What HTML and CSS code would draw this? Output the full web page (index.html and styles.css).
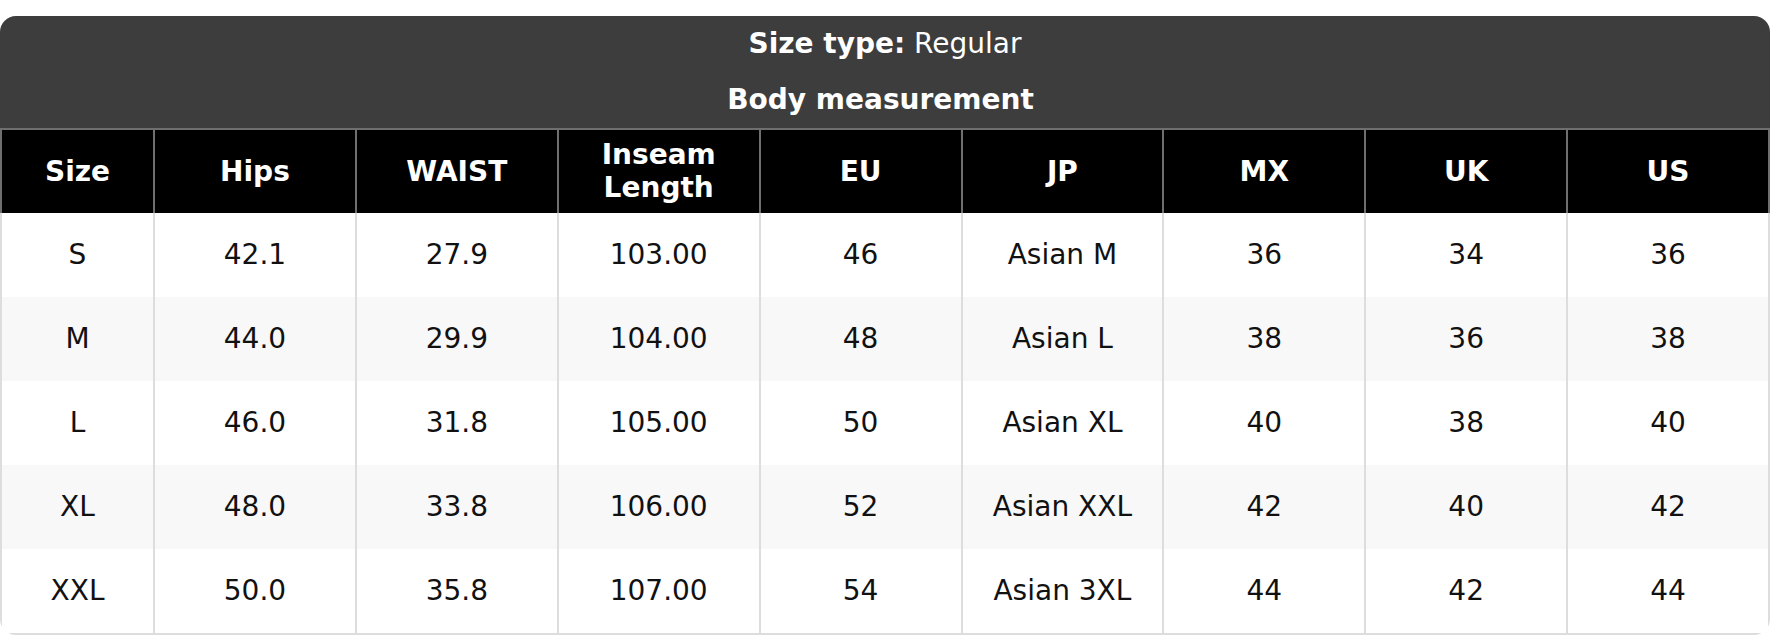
FILE: index.html
```html
<!DOCTYPE html>
<html lang="en">
<head>
<meta charset="utf-8">
<title>Size chart</title>
<link rel="stylesheet" href="styles.css">
</head>
<body>
<div class="page">
  <div class="card">
    <div class="caption">
      <div class="caption-line"><strong>Size type:</strong> Regular</div>
      <div class="caption-line caption-sub"><strong>Body measurement</strong></div>
    </div>
    <table class="chart">
      <colgroup>
        <col class="col-size">
        <col><col><col><col><col><col><col><col>
      </colgroup>
      <thead>
        <tr>
          <th>Size</th><th>Hips</th><th>WAIST</th><th>Inseam<br>Length</th><th>EU</th><th>JP</th><th>MX</th><th>UK</th><th>US</th>
        </tr>
      </thead>
      <tbody>
        <tr><td>S</td><td>42.1</td><td>27.9</td><td>103.00</td><td>46</td><td>Asian M</td><td>36</td><td>34</td><td>36</td></tr>
        <tr><td>M</td><td>44.0</td><td>29.9</td><td>104.00</td><td>48</td><td>Asian L</td><td>38</td><td>36</td><td>38</td></tr>
        <tr><td>L</td><td>46.0</td><td>31.8</td><td>105.00</td><td>50</td><td>Asian XL</td><td>40</td><td>38</td><td>40</td></tr>
        <tr><td>XL</td><td>48.0</td><td>33.8</td><td>106.00</td><td>52</td><td>Asian XXL</td><td>42</td><td>40</td><td>42</td></tr>
        <tr><td>XXL</td><td>50.0</td><td>35.8</td><td>107.00</td><td>54</td><td>Asian 3XL</td><td>44</td><td>42</td><td>44</td></tr>
      </tbody>
    </table>
  </div>
</div>
</body>
</html>
```
FILE: styles.css
```css
html, body {
  margin: 0;
  padding: 0;
  background: #ffffff;
}

body {
  font-family: "DejaVu Sans", Verdana, sans-serif;
  font-size: 28px;
  color: #111111;
}

.page {
  padding-top: 16px;
}

.card {
  width: 1770px;
  border-radius: 16px;
  overflow: hidden;
  background: #ffffff;
}

.caption {
  background: #3d3d3d;
  color: #ffffff;
  text-align: center;
}

.caption-line {
  height: 56px;
  line-height: 56px;
}

.caption-sub {
  padding-right: 9px;
}

.caption-line strong {
  font-weight: bold;
}

.chart {
  width: 1770px;
  border-collapse: collapse;
  table-layout: fixed;
}

.col-size {
  width: 153px;
}

.chart th {
  background: #000000;
  color: #ffffff;
  font-weight: bold;
  line-height: 33px;
  padding: 8px 6px 9px;
  border: 2px solid #6f6f6f;
  border-bottom: none;
  text-align: center;
  vertical-align: middle;
}

.chart td {
  height: 84px;
  padding: 0 6px;
  line-height: 32px;
  text-align: center;
  vertical-align: middle;
  border-left: 2px solid #dddddd;
  border-right: 2px solid #dddddd;
  background: #ffffff;
}

.chart tbody tr:nth-child(even) td {
  background: #f8f8f8;
}

.chart tbody tr:last-child td {
  border-bottom: 2px solid #dddddd;
}
```
